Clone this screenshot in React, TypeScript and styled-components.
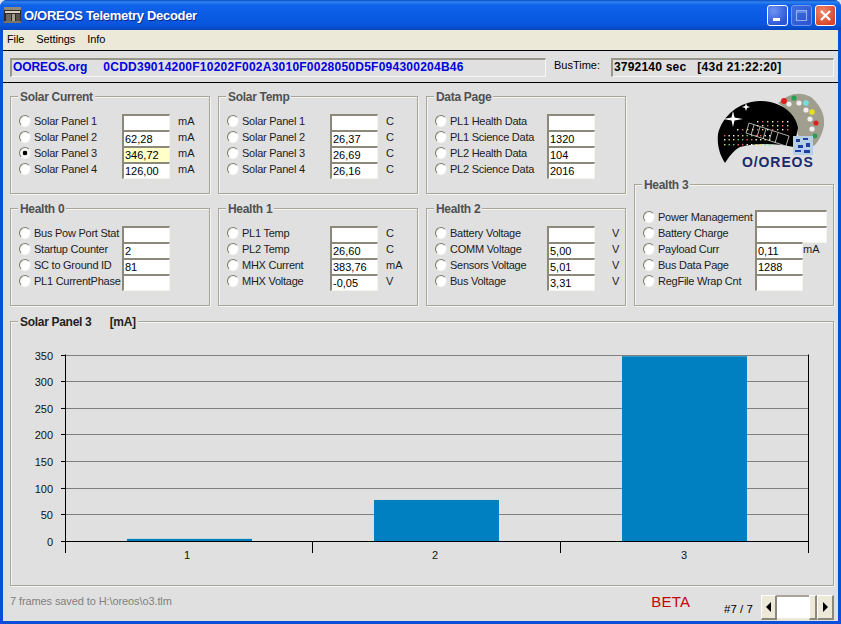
import React from 'react'
import styled, { createGlobalStyle } from 'styled-components'

const GlobalStyle = createGlobalStyle`
  html, body {
    margin: 0;
    padding: 0;
    background: #dfe6f3;
  }
  body {
    font-family: "Liberation Sans", Arial, sans-serif;
    font-size: 11px;
    color: #000;
  }
`

interface ReadingRow {
  label: string
  value?: string
  unit?: string
  selected?: boolean
  highlight?: boolean
  wide?: boolean
}

const solarCurrent: ReadingRow[] = [
  { label: 'Solar Panel 1', unit: 'mA' },
  { label: 'Solar Panel 2', value: '62,28', unit: 'mA' },
  { label: 'Solar Panel 3', value: '346,72', unit: 'mA', selected: true, highlight: true },
  { label: 'Solar Panel 4', value: '126,00', unit: 'mA' },
]

const solarTemp: ReadingRow[] = [
  { label: 'Solar Panel 1', unit: 'C' },
  { label: 'Solar Panel 2', value: '26,37', unit: 'C' },
  { label: 'Solar Panel 3', value: '26,69', unit: 'C' },
  { label: 'Solar Panel 4', value: '26,16', unit: 'C' },
]

const dataPage: ReadingRow[] = [
  { label: 'PL1 Health Data' },
  { label: 'PL1 Science Data', value: '1320' },
  { label: 'PL2 Health Data', value: '104' },
  { label: 'PL2 Science Data', value: '2016' },
]

const health0: ReadingRow[] = [
  { label: 'Bus Pow Port Stat' },
  { label: 'Startup Counter', value: '2' },
  { label: 'SC to Ground ID', value: '81' },
  { label: 'PL1 CurrentPhase' },
]

const health1: ReadingRow[] = [
  { label: 'PL1 Temp', unit: 'C' },
  { label: 'PL2 Temp', value: '26,60', unit: 'C' },
  { label: 'MHX Current', value: '383,76', unit: 'mA' },
  { label: 'MHX Voltage', value: '-0,05', unit: 'V' },
]

const health2: ReadingRow[] = [
  { label: 'Battery Voltage', unit: 'V' },
  { label: 'COMM Voltage', value: '5,00', unit: 'V' },
  { label: 'Sensors Voltage', value: '5,01', unit: 'V' },
  { label: 'Bus Voltage', value: '3,31', unit: 'V' },
]

const health3: ReadingRow[] = [
  { label: 'Power Management', wide: true },
  { label: 'Battery Charge', wide: true },
  { label: 'Payload Curr', value: '0,11', unit: 'mA' },
  { label: 'Bus Data Page', value: '1288' },
  { label: 'RegFile Wrap Cnt' },
]

const Window = styled.div`
  box-sizing: border-box;
  width: 841px;
  height: 624px;
  padding: 0 3px 3px;
  display: flex;
  flex-direction: column;
  overflow: hidden;
  background: #0a4fd8;
  border-radius: 7px 7px 0 0;
`

const TitleBar = styled.div`
  flex: none;
  height: 30px;
  margin: 0 -3px;
  padding: 0 5px 0 4px;
  display: flex;
  align-items: center;
  background: linear-gradient(180deg, #0a4cc4 0, #2f83ee 2px, #0f62ea 5px, #0a5ae4 18px, #0a55dc 25px, #0546c0 30px);
`

const TitleText = styled.div`
  flex: 1;
  margin-left: 3px;
  font-size: 13px;
  font-weight: 700;
  letter-spacing: -0.3px;
  color: #fff;
  text-shadow: 1px 1px 0 #0a2a8c;
`

const WindowButtons = styled.div`
  display: flex;
  gap: 3px;
`

const WindowButton = styled.div<{ $kind: 'min' | 'max' | 'close' }>`
  box-sizing: border-box;
  width: 21px;
  height: 21px;
  border-radius: 3px;
  border: 1px solid ${props => (props.$kind === 'max' ? '#6f95ee' : '#fff')};
  display: flex;
  align-items: center;
  justify-content: center;
  background: ${props =>
    props.$kind === 'close'
      ? 'radial-gradient(circle at 35% 30%, #ee8a6c, #d9472a 75%)'
      : props.$kind === 'max'
        ? 'linear-gradient(135deg, #3f6fe0, #2a52cc)'
        : 'radial-gradient(circle at 30% 25%, #6d95f2, #2c55d8 75%)'};
`

const MenuBar = styled.div`
  flex: none;
  height: 20px;
  padding: 0 0 0 3px;
  display: flex;
  align-items: center;
  gap: 10px;
  background: #ece9d8;
  border-bottom: 1px solid #000;
  font-size: 11px;
  letter-spacing: -0.1px;
`

const MenuItem = styled.span`
  padding: 0 1px 2px;
`

const BusRow = styled.div`
  flex: none;
  box-sizing: border-box;
  height: 32px;
  padding: 7px 4px 0 7px;
  display: flex;
  align-items: flex-start;
  background: #e0e0e0;
  border-bottom: 1px solid #000;
`

const Sunken = styled.div<{ $width: number; $color: string }>`
  box-sizing: border-box;
  width: ${props => props.$width}px;
  height: 19px;
  padding-left: 1px;
  line-height: 15px;
  font-size: 12px;
  font-weight: 700;
  white-space: pre;
  color: ${props => props.$color};
  border-style: solid;
  border-width: 2px 1px 1px 2px;
  border-color: #99968a #f6f6f2 #f6f6f2 #99968a;
`

const SiteName = styled.span`
  letter-spacing: -0.1px;
`

const HexFrame = styled.span`
  margin-left: 16px;
  letter-spacing: 0.24px;
`

const TimeSeconds = styled.span`
  letter-spacing: 0.2px;
`

const TimeClock = styled.span`
  margin-left: 11px;
  letter-spacing: 0.3px;
`

const BusLabel = styled.div`
  width: 57px;
  margin-left: 8px;
  line-height: 14px;
`

const Body = styled.div`
  flex: 1;
  min-height: 0;
  padding: 13px 4px 0 7px;
  display: flex;
  flex-direction: column;
  background: #e0e0e0;
`

const PanelGrid = styled.div`
  display: grid;
  grid-template-columns: repeat(4, 200px);
  grid-template-rows: 98px 98px;
  gap: 14px 8px;
`

const RightColumn = styled.div`
  grid-column: 4;
  grid-row: 1 / span 2;
  display: flex;
  flex-direction: column;
`

const Group = styled.div<{ $padTop?: number; $height?: number }>`
  position: relative;
  box-sizing: border-box;
  ${props => (props.$height ? `height: ${props.$height}px;` : '')}
  padding: ${props => props.$padTop ?? 17}px 0 0 8px;
  border: 1px solid #a9a699;
  box-shadow: inset 1px 1px 0 #f4f4f0, 1px 1px 0 #f4f4f0;
`

const Legend = styled.div<{ $dark?: boolean }>`
  position: absolute;
  top: -7px;
  left: 7px;
  padding: 0 2px;
  line-height: 15px;
  font-size: 12px;
  font-weight: 700;
  letter-spacing: -0.3px;
  white-space: pre;
  background: #e0e0e0;
  color: ${props => (props.$dark ? '#222' : '#505050')};
`

const Row = styled.div`
  height: 16px;
  display: flex;
  align-items: flex-start;
`

const Radio = styled.span<{ $on?: boolean }>`
  flex: none;
  box-sizing: border-box;
  width: 12px;
  height: 12px;
  margin: 1px 3px 0 0;
  border-radius: 50%;
  border: 1px solid;
  border-color: #7d7b70 #ecece4 #fafafa #7d7b70;
  background: ${props =>
    props.$on
      ? 'radial-gradient(circle, #000 0, #000 2px, #f6f6f2 2.6px)'
      : 'radial-gradient(circle at 62% 62%, #fff 0, #fff 52%, #dcdcd2 100%)'};
`

const RowLabel = styled.span<{ $width: number }>`
  flex: none;
  width: ${props => props.$width}px;
  padding-top: 1px;
  line-height: 13px;
  letter-spacing: -0.25px;
  color: #1c1c1c;
  white-space: nowrap;
`

const Field = styled.div<{ $wide?: boolean; $highlight?: boolean }>`
  flex: none;
  box-sizing: border-box;
  width: ${props => (props.$wide ? 72 : 48)}px;
  height: 17px;
  padding-left: 1px;
  line-height: 14px;
  color: #000;
  background: ${props => (props.$highlight ? '#ffffc8' : '#fff')};
  border-style: solid;
  border-width: 2px 1px 1px 2px;
  border-color: #8c897a #f4f4ec #f4f4ec #8c897a;
`

const Unit = styled.span<{ $gap: number }>`
  margin-left: ${props => props.$gap}px;
  padding-top: 1px;
  line-height: 13px;
  color: #1c1c1c;
`

const LogoArea = styled.div`
  height: 88px;
`

const LogoSvg = styled.svg`
  display: block;
  overflow: visible;
`

const ChartPanel = styled(Group)`
  flex: none;
  width: 824px;
  height: 265px;
  margin-top: 15px;
  padding: 0;
`

const ChartSvg = styled.svg`
  display: block;
  overflow: visible;
  font-family: "Liberation Sans", Arial, sans-serif;
  font-size: 11px;
`

const Footer = styled.div`
  flex: 1;
  display: flex;
  align-items: flex-start;
`

const StatusText = styled.div`
  width: 641px;
  margin-top: 8px;
  line-height: 14px;
  letter-spacing: -0.1px;
  color: #808080;
`

const Beta = styled.div`
  width: 74px;
  margin-top: 7px;
  padding-left: 1px;
  box-sizing: border-box;
  font-size: 15px;
  line-height: 17px;
  letter-spacing: 0.3px;
  color: #c80000;
`

const Counter = styled.div`
  width: 37px;
  margin-top: 16px;
  font-size: 11.5px;
  line-height: 14px;
`

const Scroller = styled.div`
  margin-top: 9px;
  display: flex;
  height: 25px;
`

const ScrollButton = styled.div<{ $width: number }>`
  box-sizing: border-box;
  width: ${props => props.$width}px;
  display: flex;
  align-items: center;
  justify-content: center;
  background: #ece9d8;
  border-style: solid;
  border-width: 1px 2px 2px 1px;
  border-color: #fff #8c897a #8c897a #fff;
`

const ScrollTrack = styled.div`
  box-sizing: border-box;
  width: 32px;
  background: #fff;
  border-top: 2px solid #a9a699;
  border-bottom: 2px solid #ece9d8;
`

const Arrow = styled.span<{ $dir: 'left' | 'right' }>`
  width: 0;
  height: 0;
  border-top: 5px solid transparent;
  border-bottom: 5px solid transparent;
  ${props => (props.$dir === 'left' ? 'border-right: 5px solid #000;' : 'border-left: 5px solid #000;')}
`

const AppIcon = () => (
  <svg width="17" height="16" viewBox="0 0 17 16">
    <rect width="17" height="16" fill="#2b2a26" />
    <rect x="0" y="0" width="17" height="3" fill="#8f8a78" />
    <rect x="1" y="4" width="15" height="2" fill="#d8d2bc" />
    <rect x="2" y="7" width="5" height="7" fill="#6c6a60" />
    <rect x="8" y="7" width="3" height="7" fill="#a7a18c" />
    <rect x="12" y="7" width="4" height="7" fill="#55534a" />
    <rect x="0" y="14" width="17" height="2" fill="#77746a" />
  </svg>
)

const Readings: React.FC<{ rows: ReadingRow[]; labelWidth?: number; unitGap?: number }> = ({
  rows,
  labelWidth = 88,
  unitGap = 8,
}) => (
  <>
    {rows.map(row => (
      <Row key={row.label}>
        <Radio $on={row.selected} />
        <RowLabel $width={labelWidth}>{row.label}</RowLabel>
        <Field $wide={row.wide} $highlight={row.highlight}>{row.value}</Field>
        {row.unit && <Unit $gap={unitGap}>{row.unit}</Unit>}
      </Row>
    ))}
  </>
)

const logoDots = [
  [784, 101, '#e02020', 3], [789, 104, '#eee', 2.6], [794, 98, '#20a050', 2.6], [799, 103, '#eee', 2.6],
  [806, 103, '#70e0e0', 2.8], [806, 110, '#eee', 2.6], [812, 112, '#e8e020', 2.8], [810, 119, '#eee', 2.6],
  [816, 123, '#e02020', 2.6], [812, 129, '#eee', 2.6], [815, 136, '#20a050', 2.4],
] as const

const skyColors = ['#ff6060', '#ffffff', '#e8e060', '#60d080']

const Logo = () => {
  const sky: React.ReactNode[] = []
  ;[135, 139, 144].forEach((y, r) => {
    for (let x = 724; x < 772; x += 4.5) {
      sky.push(<rect key={`a${y}${x}`} x={x} y={y} width="1.4" height="1.4" fill={skyColors[(r + Math.round(x)) % 4]} />)
    }
  })
  ;[121, 125, 129].forEach((y, r) => {
    for (let x = 737; x < 788; x += 5) {
      if (x > 752 || r === 2) {
        sky.push(<rect key={`b${y}${x}`} x={x} y={y} width="1.4" height="1.4" fill={skyColors[(r + Math.round(x)) % 3]} />)
      }
    }
  })
  return (
    <LogoSvg width="200" height="88" viewBox="634 96 200 88">
      <path d="M778 103 Q795 88 811 97 Q828 112 823 130 Q820 140 814 146 L798 135 Q796 115 778 103Z" fill="#a09f8f" />
      {logoDots.map(([x, y, c, s]) => (
        <circle key={`${x}-${y}`} cx={x} cy={y} r={s} fill={c} />
      ))}
      <path d="M718 134 C722 116 740 101 760 101 C780 101 796 113 798 128 L794 147 C775 143 755 143 740 147 C733 151 729 157 725 163 C719 154 717 144 718 134Z" fill="#000" />
      {sky}
      <path d="M733 111 L734.5 117.5 L743 119 L734.5 120.5 L733 127 L731.5 120.5 L723 119 L731.5 117.5Z" fill="#fff" />
      <path d="M746 103 L747 106 L750 107 L747 108 L746 111 L745 108 L742 107 L745 106Z" fill="#fff" />
      <g stroke="#d8d8d0" strokeWidth="0.8" fill="none">
        <path d="M749 123 L789 136 L786 146 L746 133Z" />
        <path d="M754 125 L751 135 M760 127 L757 137 M766 129 L763 139 M772 131 L769 141 M778 133 L775 143" />
      </g>
      <rect x="793" y="136" width="20" height="19" fill="#b8cfe8" />
      <path d="M796 139h4v3h-4z M803 138h5v2h-5z M798 145h5v3h-5z M806 143h4v4h-4z M795 150h6v2h-6z M804 150h6v3h-6z" fill="#2040a0" />
      <text x="742" y="167" fontFamily="Liberation Sans, Arial, sans-serif" fontWeight="700" fontSize="14" letterSpacing="0.9" fill="#1a2a6c">O/OREOS</text>
    </LogoSvg>
  )
}

const chartBars = [
  { value: 4, x: 116, label: '1', labelX: 176 },
  { value: 77, x: 363, label: '2', labelX: 424 },
  { value: 346.72, x: 611, label: '3', labelX: 673 },
]

const BAR_WIDTH = 125
const Y_ZERO = 219
const Y_SCALE = 186.5 / 350

const Chart = () => (
  <ChartSvg width="824" height="264" viewBox="0 0 824 264">
    {[50, 100, 150, 200, 250, 300, 350].map(v => {
      const y = Math.round(Y_ZERO - v * Y_SCALE) + 0.5
      return <line key={v} x1="54" x2="797" y1={y} y2={y} stroke="#808080" />
    })}
    {chartBars.map(b => (
      <rect key={b.label} x={b.x} width={BAR_WIDTH} y={Y_ZERO - b.value * Y_SCALE} height={b.value * Y_SCALE} fill="#0080c0" />
    ))}
    {[0, 50, 100, 150, 200, 250, 300, 350].map(v => {
      const y = Math.round(Y_ZERO - v * Y_SCALE) + 0.5
      return (
        <g key={v}>
          <line x1="50" x2="54" y1={y} y2={y} stroke="#000" />
          <text x="42" y={y + 4} textAnchor="end" fill="#111">{v}</text>
        </g>
      )
    })}
    <line x1="54" x2="798" y1={Y_ZERO + 0.5} y2={Y_ZERO + 0.5} stroke="#000" />
    <line x1="54.5" x2="54.5" y1={Y_ZERO - 350 * Y_SCALE} y2="231" stroke="#000" />
    <line x1="797.5" x2="797.5" y1={Y_ZERO - 350 * Y_SCALE} y2="231" stroke="#000" />
    <line x1="301.5" x2="301.5" y1={Y_ZERO} y2="231" stroke="#000" />
    <line x1="549.5" x2="549.5" y1={Y_ZERO} y2="231" stroke="#000" />
    {chartBars.map(b => (
      <text key={b.label} x={b.labelX} y="237" textAnchor="middle" fill="#111">{b.label}</text>
    ))}
  </ChartSvg>
)

const App: React.FC = () => (
  <Window>
    <GlobalStyle />
    <TitleBar>
      <AppIcon />
      <TitleText>O/OREOS Telemetry Decoder</TitleText>
      <WindowButtons>
        <WindowButton $kind="min">
          <svg width="13" height="13" viewBox="0 0 13 13"><rect x="2" y="9" width="7" height="3" fill="#fff" /></svg>
        </WindowButton>
        <WindowButton $kind="max">
          <svg width="13" height="13" viewBox="0 0 13 13"><path d="M1.5 1.5h10v10h-10z M1.5 3h10" fill="none" stroke="#8fb0f4" strokeWidth="1.2" /></svg>
        </WindowButton>
        <WindowButton $kind="close">
          <svg width="13" height="13" viewBox="0 0 13 13"><path d="M2 2l9 9M11 2l-9 9" stroke="#fff" strokeWidth="2.2" /></svg>
        </WindowButton>
      </WindowButtons>
    </TitleBar>
    <MenuBar>
      <MenuItem>File</MenuItem>
      <MenuItem>Settings</MenuItem>
      <MenuItem>Info</MenuItem>
    </MenuBar>
    <BusRow>
      <Sunken $width={536} $color="#0000e0">
        <SiteName>OOREOS.org</SiteName>
        <HexFrame>0CDD39014200F10202F002A3010F0028050D5F094300204B46</HexFrame>
      </Sunken>
      <BusLabel>BusTime:</BusLabel>
      <Sunken $width={223} $color="#000">
        <TimeSeconds>3792140 sec</TimeSeconds>
        <TimeClock>[43d 21:22:20]</TimeClock>
      </Sunken>
    </BusRow>
    <Body>
      <PanelGrid>
        <Group>
          <Legend>Solar Current</Legend>
          <Readings rows={solarCurrent} />
        </Group>
        <Group>
          <Legend>Solar Temp</Legend>
          <Readings rows={solarTemp} />
        </Group>
        <Group>
          <Legend>Data Page</Legend>
          <Readings rows={dataPage} labelWidth={97} />
        </Group>
        <RightColumn>
          <LogoArea>
            <Logo />
          </LogoArea>
          <Group $padTop={25} $height={122}>
            <Legend>Health 3</Legend>
            <Readings rows={health3} labelWidth={97} unitGap={0} />
          </Group>
        </RightColumn>
        <Group>
          <Legend>Health 0</Legend>
          <Readings rows={health0} />
        </Group>
        <Group>
          <Legend>Health 1</Legend>
          <Readings rows={health1} />
        </Group>
        <Group>
          <Legend>Health 2</Legend>
          <Readings rows={health2} labelWidth={97} unitGap={17} />
        </Group>
      </PanelGrid>
      <ChartPanel>
        <Legend $dark>{'Solar Panel 3      [mA]'}</Legend>
        <Chart />
      </ChartPanel>
      <Footer>
        <StatusText>7 frames saved to H:\oreos\o3.tlm</StatusText>
        <Beta>BETA</Beta>
        <Counter>#7 / 7</Counter>
        <Scroller>
          <ScrollButton $width={16}><Arrow $dir="left" /></ScrollButton>
          <ScrollTrack />
          <ScrollButton $width={8} />
          <ScrollButton $width={17}><Arrow $dir="right" /></ScrollButton>
        </Scroller>
      </Footer>
    </Body>
  </Window>
)

export default App
